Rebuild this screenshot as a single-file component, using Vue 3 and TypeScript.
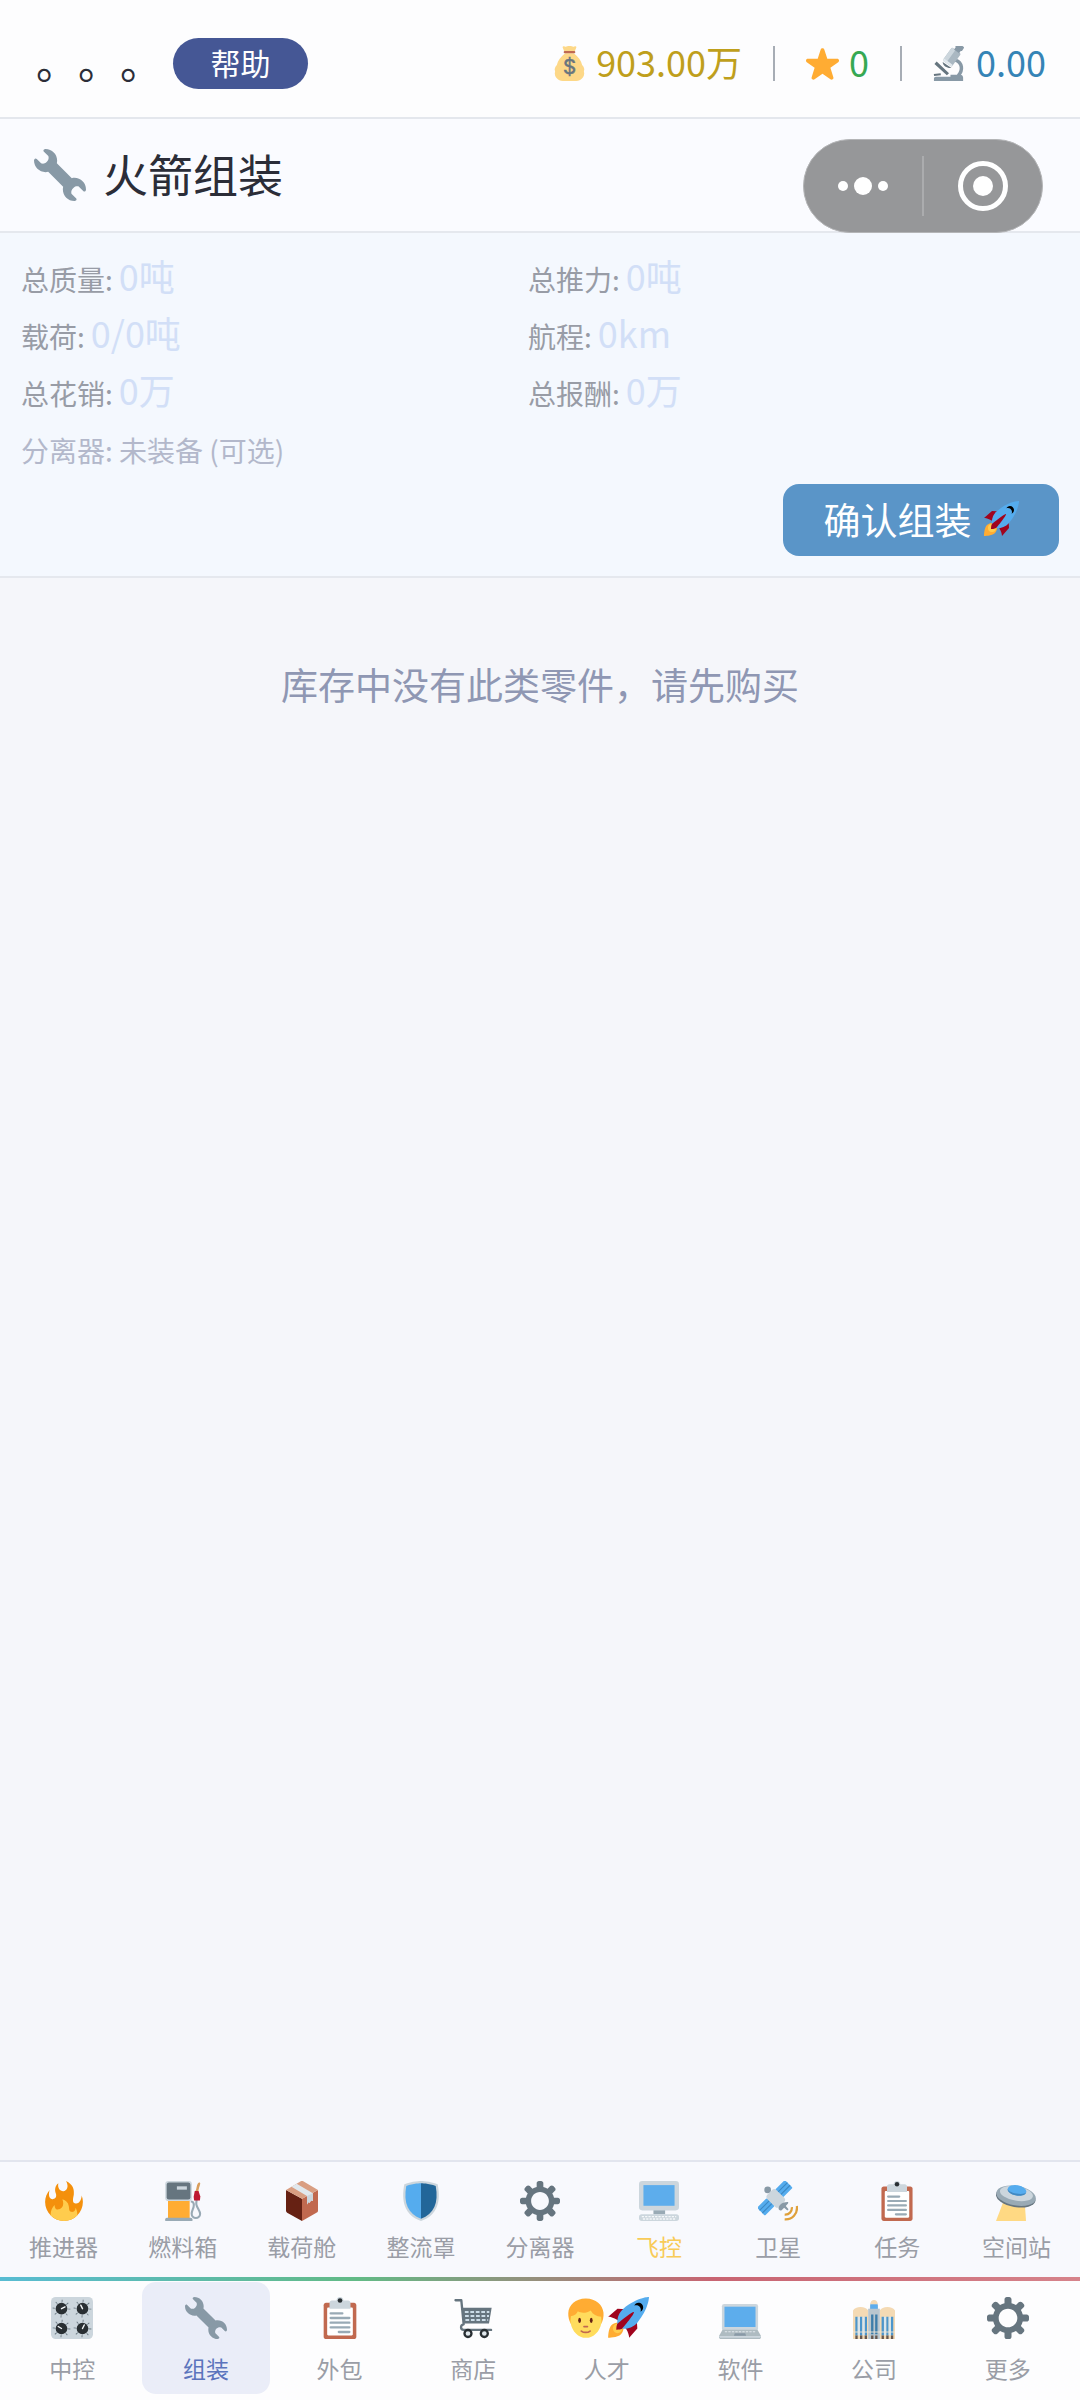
<script setup lang="ts">
import { ref } from 'vue'

interface Stat {
  label: string
  value: string
}

interface Tab {
  label: string
  icons: string[]
  highlight?: boolean
}

const stats: Stat[] = [
  { label: '总质量:', value: '0吨' },
  { label: '总推力:', value: '0吨' },
  { label: '载荷:', value: '0/0吨' },
  { label: '航程:', value: '0km' },
  { label: '总花销:', value: '0万' },
  { label: '总报酬:', value: '0万' },
]

const partTabs: Tab[] = [
  { label: '推进器', icons: ['fire'] },
  { label: '燃料箱', icons: ['pump'] },
  { label: '载荷舱', icons: ['package'] },
  { label: '整流罩', icons: ['shield'] },
  { label: '分离器', icons: ['gear'] },
  { label: '飞控', icons: ['desktop'], highlight: true },
  { label: '卫星', icons: ['satellite'] },
  { label: '任务', icons: ['clipboard'] },
  { label: '空间站', icons: ['ufo'] },
]

const mainTabs: Tab[] = [
  { label: '中控', icons: ['knobs'] },
  { label: '组装', icons: ['wrench'] },
  { label: '外包', icons: ['clipboard'] },
  { label: '商店', icons: ['cart'] },
  { label: '人才', icons: ['person', 'rocket'] },
  { label: '软件', icons: ['laptop'] },
  { label: '公司', icons: ['office'] },
  { label: '更多', icons: ['gear'] },
]

const activeMain = ref('组装')
</script>

<template>
  <div class="app">
    <svg class="sprite" aria-hidden="true">
      <symbol id="wrench" viewBox="0 0 36 36">
        <path fill="#8899A6" d="M27.989 19.977c-.622 0-1.225.078-1.806.213L15.811 9.818c.134-.581.212-1.184.212-1.806C16.023 3.587 12.436 0 8.012 0 7.11 0 5.91.916 6.909 1.915l2.997 2.997s.999 1.998-.999 3.995-3.996.998-3.996.998L1.915 6.909C.916 5.91 0 7.105 0 8.012c0 4.425 3.587 8.012 8.012 8.012.622 0 1.225-.078 1.806-.212l10.371 10.371c-.135.581-.213 1.184-.213 1.806 0 4.425 3.588 8.011 8.012 8.011.901 0 2.101-.916 1.102-1.915l-2.997-2.997s-.999-1.998.999-3.995 3.995-.999 3.995-.999l2.997 2.997c1 .999 1.916-.196 1.916-1.102 0-4.425-3.587-8.012-8.011-8.012z" />
      </symbol>
      <symbol id="gear" viewBox="0 0 36 36">
        <path fill="#66757F" d="M34 15h-3.362c-.324-1.369-.864-2.651-1.582-3.814l2.379-2.379c.781-.781.781-2.048 0-2.829l-1.414-1.414c-.781-.781-2.047-.781-2.828 0l-2.379 2.379C23.65 6.225 22.369 5.686 21 5.362V2c0-1.104-.896-2-2-2h-2c-1.104 0-2 .896-2 2v3.362c-1.369.324-2.651.864-3.814 1.582L8.808 4.565c-.781-.781-2.048-.781-2.828 0L4.565 5.979c-.781.781-.781 2.048-.001 2.829l2.379 2.379C6.225 12.35 5.686 13.632 5.362 15H2c-1.104 0-2 .896-2 2v2c0 1.104.896 2 2 2h3.362c.324 1.368.864 2.65 1.582 3.813l-2.379 2.379c-.78.78-.78 2.048.001 2.829l1.414 1.414c.78.78 2.047.78 2.828 0l2.379-2.379c1.163.719 2.445 1.258 3.814 1.582V34c0 1.104.896 2 2 2h2c1.104 0 2-.896 2-2v-3.362c1.368-.324 2.65-.864 3.813-1.582l2.379 2.379c.781.781 2.047.781 2.828 0l1.414-1.414c.781-.781.781-2.048 0-2.829l-2.379-2.379c.719-1.163 1.258-2.445 1.582-3.814H34c1.104 0 2-.896 2-2v-2C36 15.896 35.104 15 34 15zM18 26c-4.418 0-8-3.582-8-8s3.582-8 8-8 8 3.582 8 8-3.582 8-8 8z" />
      </symbol>
      <symbol id="fire" viewBox="0 0 36 36">
        <path fill="#F4900C" d="M35 19c0-2.062-.367-4.039-1.04-5.868-.46 5.389-3.333 8.157-6.335 6.868-2.812-1.208-.917-5.917-.777-8.164.236-3.809-.012-8.169-6.931-11.794 2.875 5.5.333 8.917-2.333 9.125-2.958.231-5.667-2.542-4.667-7.042-3.238 2.386-3.332 6.402-2.333 9 1.042 2.708-.042 4.958-2.583 5.208-2.84.28-4.418-3.041-2.963-8.333C2.52 10.965 1 14.805 1 19c0 9.389 7.611 17 17 17s17-7.611 17-17z" />
        <path fill="#FFCC4D" d="M28.394 23.999c.148 3.084-2.561 4.293-4.019 3.709-2.106-.843-1.541-2.291-2.083-5.291s-2.625-5.083-5.708-6c2.25 6.333-1.247 8.667-3.08 9.084-1.872.426-3.753-.001-3.968-4.007C7.352 23.668 6 26.676 6 30c0 .368.023.73.055 1.09C9.125 34.124 13.342 36 18 36s8.875-1.876 11.945-4.91c.032-.36.055-.722.055-1.09 0-2.187-.584-4.236-1.606-6.001z" />
      </symbol>
      <symbol id="pump" viewBox="0 0 36 36">
        <path d="M25 18.500c3 0 3 2.500 2.500 5-.8 2.500-1.700 4-1.700 6a3.700 3.700 0 0 0 7.600 0c0-2.500-2.900-5.500-3.400-8.500-.3-2 .5-4 .3-5.500" fill="none" stroke="#99AAB5" stroke-width="1.900" />
        <path d="M29 9.500c1.500-2.500 1-5.500 2.500-7.500.8-1 2.200-.6 2 .4-.5 2.500-1.500 4-1.700 7.200z" fill="#D99E5C" />
        <path d="M28.600 9h3.400l1.600 5-.4 3.500h-5.200l-.4-3z" fill="#BE1931" />
        <path fill="#FFAC33" d="M4.500 17h19.500v17H4.500z" />
        <rect x="2" y="0" width="24" height="18" rx="3" fill="#CCD6DD" />
        <rect x="3.300" y="1.300" width="21.400" height="15.400" rx="2" fill="#66757F" />
        <path fill="#CCD6DD" d="M12.500 4.800h9v3h-9z" />
        <path fill="#99AAB5" d="M2 34.500C2 33.700 2.700 33 3.500 33H25c.8 0 1.500.7 1.500 1.500V36H2z" />
      </symbol>
      <symbol id="package" viewBox="0 0 36 36">
        <path fill="#662113" d="M3.600 8L18 16v20L4.600 28.500C4 28 3.600 27.500 3.600 27z" />
        <path fill="#C1694F" d="M18 16l14.400-8v18.500c0 .8-.4 1.500-1 1.900L18 36z" />
        <path fill="#D99E82" d="M3.600 8L16.500.4c1-.5 2-.5 3 0L32.400 8 18 16z" />
        <path fill="#E1E8ED" d="M8.500 5.200L13.200 2.500 27.800 11v7l-1.600-.5-1.300 2-1.200-.3-1.200 2V13.500z" />
        <path fill="#CCD6DD" d="M22.500 13.500L27.800 11v7l-1.600-.5-1.300 2-1.200-.3-1.200 2z" />
      </symbol>
      <symbol id="shield" viewBox="0 0 36 36">
        <path fill="#CCD6DD" d="M33 3c-7-3-15-3-15-3S10 0 3 3C0 18 3 31 18 36c15-5 18-18 15-33z" />
        <path fill="#55ACEE" d="M18 33.884C6.412 29.729 1.961 19.831 4.76 4.444 11.063 2.029 17.928 2 18 2z" />
        <path fill="#226699" d="M31.24 4.444C24.936 2.026 18.071 2 18 2v31.884c11.588-4.155 16.039-14.053 13.24-29.44z" />
      </symbol>
      <symbol id="desktop" viewBox="0 0 36 36">
        <path fill="#99AAB5" d="M13 25h10.500v5H13z" />
        <rect width="36" height="26.500" rx="3" fill="#CCD6DD" />
        <rect x="4" y="3.700" width="28" height="18.600" fill="#5DADEC" />
        <rect y="30" width="36" height="6" rx="2.500" fill="#CCD6DD" />
        <path d="M2.500 32h31M3.500 34.200h29" stroke="#F5F8FA" stroke-width="1.200" stroke-dasharray="2 1" />
      </symbol>
      <symbol id="satellite" viewBox="0 0 36 36">
        <g transform="rotate(-45 23.300 7)">
          <rect x="17" y="2" width="12.500" height="10" rx="1" fill="#55ACEE" />
          <path d="M17 5.300h12.500M17 8.700h12.500" stroke="#3B88C3" stroke-width="1" />
        </g>
        <g transform="rotate(-45 7 23.300)">
          <rect x=".8" y="18.300" width="12.500" height="10" rx="1" fill="#55ACEE" />
          <path d="M.8 21.600h12.500M.8 25h12.500" stroke="#3B88C3" stroke-width="1" />
        </g>
        <circle cx="8.700" cy="8" r="3" fill="#8899A6" />
        <rect x="8.500" y="9.800" width="15.500" height="11.500" rx="3" transform="rotate(45 16 15.300)" fill="#CCD6DD" />
        <path d="M18.500 24.500c.5-3 3.500-5.500 8-5.500.8 0 1 .6.5 1.200l-2 2.300 2.500 3-1 1-3-2.500-2 2c-1.200 1-3 .3-3-1.500z" fill="#8899A6" />
        <path d="M30.500 23.500c.3 4-2.500 7-6.500 6.700M35 22.500c.8 7-4 12.500-11 12" fill="none" stroke="#DFA03A" stroke-width="2" />
      </symbol>
      <symbol id="clipboard" viewBox="0 0 36 36">
        <path fill="#C1694F" d="M32 34c0 1.104-.896 2-2 2H6c-1.104 0-2-.896-2-2V7c0-1.104.896-2 2-2h24c1.104 0 2 .896 2 2v27z" />
        <path fill="#FFF" d="M29 32c0 .553-.447 1-1 1H8c-.552 0-1-.447-1-1V10c0-.552.448-1 1-1h20c.553 0 1 .448 1 1v22z" />
        <path fill="#CCD6DD" d="M25 3h-4c0-1.657-1.343-3-3-3s-3 1.343-3 3h-4c-1.104 0-2 .896-2 2v5h18V5c0-1.104-.896-2-2-2z" />
        <circle cx="18" cy="3" r="2" fill="#292F33" />
        <path d="M10 14h10M10 18h16M10 22h16M10 26h16M17 30h9" stroke="#99AAB5" stroke-width="2" stroke-linecap="round" />
      </symbol>
      <symbol id="ufo" viewBox="0 0 36 36">
        <path fill="#FFD983" d="M6.500 19L26 21l1 15H0z" />
        <g transform="rotate(10 18 13.500)">
          <ellipse cx="18" cy="15" rx="18" ry="8.500" fill="#66757F" />
          <ellipse cx="18" cy="13.200" rx="18" ry="8.800" fill="#99AAB5" />
          <ellipse cx="18" cy="11.200" rx="15" ry="6.500" fill="#CCD6DD" />
          <ellipse cx="18" cy="8.300" rx="8.500" ry="4.600" fill="#55ACEE" />
          <path d="M9.500 8.500c1.500 3.600 15.500 3.600 17 0 0 6-17 6-17 0z" fill="#4289C1" />
        </g>
      </symbol>
      <symbol id="knobs" viewBox="0 0 36 36">
        <rect width="36" height="36" rx="4" fill="#CCD6DD" />
        <g fill="none" stroke="#66757F" stroke-width="2.200" stroke-dasharray=".7 4.400">
          <circle cx="9" cy="10" r="6.500" />
          <circle cx="27" cy="10" r="6.500" />
          <circle cx="9" cy="27" r="6.500" />
          <circle cx="27" cy="27" r="6.500" />
        </g>
        <g fill="#292F33">
          <circle cx="9" cy="10" r="5" />
          <circle cx="27" cy="10" r="5" />
          <circle cx="9" cy="27" r="5" />
          <circle cx="27" cy="27" r="5" />
        </g>
        <path d="M9 10l3-1.500M27 10l-1.500-3M9 27l-2.800-1.700M27 27l1.500-3" stroke="#F5F8FA" stroke-width="1.200" stroke-linecap="round" />
      </symbol>
      <symbol id="cart" viewBox="0 0 36 36">
        <path d="M3 2.800h5L10 23.500c-3 .5-3 4.500 0 4.700h23.500" fill="none" stroke="#66757F" stroke-width="2" stroke-linecap="round" stroke-linejoin="round" />
        <path d="M8.800 9.300H34l-2.300 13.500H10z" fill="#66757F" />
        <path d="M11 12.800h21M11.200 16.200h20.500M11.500 19.800h19.500" stroke="#CCDDE8" stroke-width="1.700" stroke-dasharray="3.200 1.500" />
        <circle cx="13.700" cy="31.300" r="3" fill="#E1E8ED" stroke="#292F33" stroke-width="2" />
        <circle cx="27.700" cy="31.300" r="3" fill="#E1E8ED" stroke="#292F33" stroke-width="2" />
      </symbol>
      <symbol id="person" viewBox="0 0 36 36">
        <path fill="#FFAC33" d="M18 1.200C9.500 1 3 6.500 2.800 14c-.1 3 .7 6.500 2.200 9h26c1.500-2.500 2.300-6 2-9.500C32.400 6.500 26.500 1.400 18 1.200z" />
        <path fill="#FFDC5D" d="M5 16.500c3.500-.5 5-2 6-4.200 3.500 2.200 8 1.200 11-.8 2 3.500 5 5 9 5.500 0 1.500.5 3 .2 5C30 29.500 24.500 35 18 35S6 29.500 4.800 22c-.3-2 .2-4 .2-5.500z" />
        <ellipse cx="12.500" cy="20" rx="1.200" ry="2.200" fill="#662113" />
        <ellipse cx="22.500" cy="20" rx="1.200" ry="2.200" fill="#662113" />
        <path d="M16.300 25.300h2.900M14 29.200c2 1.600 5.500 1.600 7.500 0" fill="none" stroke="#C1694F" stroke-width="1.500" stroke-linecap="round" />
      </symbol>
      <symbol id="rocket" viewBox="0 0 36 36">
        <path fill="#A0041E" d="M1 17l8-7 16 1 1 16-7 8s.001-5.999-6-12-12-6-12-6z" />
        <path fill="#FFAC33" d="M.973 35s-.036-7.979 2.985-11S15 21.187 15 21.187 14.999 29 11.999 32c-3 3-11.026 3-11.026 3z" />
        <circle cx="9" cy="27" r="4" fill="#FFCC4D" />
        <path fill="#55ACEE" d="M35.999 0s-10 0-22 10c-6 5-6 14-4 16s11 2 16-4c10-12 10-22 10-22z" />
        <path d="M26.999 5c-1.623 0-3.013.971-3.641 2.36.502-.227 1.055-.36 1.641-.36 2.209 0 4 1.791 4 4 0 .586-.133 1.139-.359 1.64 1.389-.627 2.359-2.017 2.359-3.64 0-2.209-1.791-4-4-4z" />
        <path fill="#A0041E" d="M8 28s0-4 1-5 13.001-10.999 14-10-9.001 13-10.001 14S8 28 8 28z" />
      </symbol>
      <symbol id="laptop" viewBox="0 0 36 36">
        <rect x="2.500" y="6" width="31" height="23" rx="2" fill="#CCD6DD" />
        <rect x="4.700" y="8.300" width="26.600" height="17.400" fill="#5DADEC" />
        <path fill="#AEBBC1" d="M3 28h30l3 5.500v1c0 1-.8 1.500-1.500 1.500h-33C.8 36 0 35.500 0 34.500v-1z" />
        <path fill="#CCD6DD" d="M0 33.500h36c0 1-.7 1.500-1.500 1.500h-33C.7 35 0 34.500 0 33.500z" />
        <path d="M5 29.800h26" stroke="#E1E8ED" stroke-dasharray="2 1" />
        <path fill="#8899A6" d="M13.500 31h9l.7 2.300H12.800z" />
      </symbol>
      <symbol id="office" viewBox="0 0 36 36">
        <path fill="#F4DAB4" d="M0 11.500C1 9.500 3.500 8.500 6.500 8.500S12 9.500 13 11.500V36H0zM23 11.500c1-2 3.500-3 6.500-3s5.500 1 6.500 3V36H23z" />
        <path fill="#B9C6CE" d="M13 10h1.500C14.500 5 16 3 18 3s3.500 2 3.500 7H23v26H13z" />
        <path fill="#F4DAB4" d="M15 5c.5-1.500 1.500-2.500 3-2.500S20.500 3.500 21 5v1h-6z" />
        <path fill="#5DADEC" d="M14.800 6.500h6.400V10h-6.400z" />
        <path d="M3 17v16M7 17v16M11 17v16M25.500 17v16M29.500 17v16M33.500 17v16" stroke="#4C96CC" stroke-width="2" />
        <path d="M5 17v16M9 17v16M27.500 17v16M31.500 17v16" stroke="#D8E6EE" stroke-width="1.800" />
        <path d="M16.500 15v17M20 15v17" stroke="#3D7DAA" stroke-width="2" />
        <path d="M0 30h36" stroke="#EEE5D5" stroke-width=".8" />
        <path d="M3 33v3M7 33v3M11 33v3M16.500 33v3M20 33v3M25.500 33v3M29.500 33v3M33.500 33v3" stroke="#66574F" stroke-width="2" />
      </symbol>
      <symbol id="star" viewBox="0 0 36 36">
        <path fill="#FFAC33" d="M27.287 34.627c-.404 0-.806-.124-1.152-.371L18 28.422l-8.135 5.834c-.343.247-.744.371-1.148.371-.409 0-.814-.126-1.161-.378-.686-.499-.97-1.383-.711-2.189l3.046-9.611-8.066-5.834c-.677-.505-.957-1.387-.696-2.188.261-.802 1.008-1.346 1.851-1.349l10.078-.015 3.094-9.487C16.435 2.773 17.174 2.250 18 2.250s1.565.523 1.848 1.326l3.096 9.487 10.086.015c.843.003 1.590.547 1.851 1.349.26.801-.02 1.683-.696 2.188l-8.072 5.834 3.050 9.611c.259.806-.025 1.690-.711 2.189-.347.252-.751.376-1.165.378z" />
      </symbol>
      <symbol id="money" viewBox="0 0 36 36">
        <path fill="#FDD888" d="M13.500 7.500h9c4.500 3.500 7.500 7.500 8.500 12 2 2 2.800 4.500 1.800 6.500 1 3.500-.3 6-2 7.500C29.500 35.300 27.500 36 25 36H11c-2.500 0-4.500-.7-5.800-2.500-1.700-1.500-3-4-2-7.500-1-2-.2-4.500 1.800-6.500 1-4.500 4-8.500 8.500-12z" />
        <path fill="#FDD888" d="M12.500 5.500L11 1.500c-.3-1.200.8-1.700 2-1 1.700.8 2.500-.5 5-.5s3.300 1.300 5 .5c1.200-.7 2.300-.2 2 1l-1.500 4z" />
        <rect x="12" y="5.200" width="12" height="2.300" rx="1.100" fill="#BF6952" />
        <text x="18" y="29" text-anchor="middle" font-family="Inter, sans-serif" font-size="21" fill="#67757F" stroke="#67757F" stroke-width=".5">$</text>
      </symbol>
      <symbol id="microscope" viewBox="0 0 36 36">
        <path d="M24 14.500c7.500 2.500 8 10.500 3 16" fill="none" stroke="#8899A6" stroke-width="3.600" />
        <path fill="#66757F" d="M2.500 18.500l2.300-2.500L17.500 28l-2.200 2z" />
        <path fill="#8899A6" d="M2 36v-2.500C2 32.200 3 31.500 4 31.500h15v-2h10c1.800 0 3 1.200 3 3V36z" />
        <path d="M2 29.800l7-.8" stroke="#66757F" stroke-width="2" />
        <path fill="#66757F" d="M11 16.500l9 6c-3.500.8-9-1.500-9-6z" />
        <g transform="rotate(36 21 11)">
          <rect x="15" y="3.500" width="11.500" height="16.500" rx="1.500" fill="#AAB8C2" />
          <rect x="15" y="3.500" width="4.500" height="16.500" rx="1.500" fill="#CCD6DD" />
          <rect x="18" y="0" width="6.400" height="4" fill="#8899A6" />
          <rect x="17" y="-4" width="8.400" height="5" rx="1.200" fill="#8899A6" />
          <rect x="15" y="17.500" width="11.500" height="2.500" rx="1" fill="#E1E8ED" />
        </g>
      </symbol>
    </svg>

    <header class="topbar">
      <span class="player">。。。</span>
      <button type="button" class="help">帮助</button>
      <ul class="wallet">
        <li class="money">
          <svg class="i35" aria-hidden="true"><use href="#money" /></svg>903.00万
        </li>
        <li class="fame">
          <svg class="i35" aria-hidden="true"><use href="#star" /></svg>0
        </li>
        <li class="science">
          <svg class="i35" aria-hidden="true"><use href="#microscope" /></svg>0.00
        </li>
      </ul>
    </header>

    <section class="titlebar">
      <svg class="i52" aria-hidden="true"><use href="#wrench" /></svg>
      <h1>火箭组装</h1>
      <div class="capsule">
        <button type="button" aria-label="更多选项">
          <svg width="52" height="52" viewBox="0 0 52 52" fill="#fff">
            <circle cx="6" cy="26" r="5" />
            <circle cx="26" cy="26" r="9" />
            <circle cx="46" cy="26" r="5" />
          </svg>
        </button>
        <span class="split"></span>
        <button type="button" aria-label="关闭">
          <svg width="52" height="52" viewBox="0 0 52 52" fill="none">
            <circle cx="26" cy="26" r="22.500" stroke="#fff" stroke-width="5" />
            <circle cx="26" cy="26" r="10" fill="#fff" />
          </svg>
        </button>
      </div>
    </section>

    <section class="summary">
      <dl class="stats">
        <div v-for="s in stats" :key="s.label" class="stat">
          <dt>{{ s.label }}</dt>
          <dd>{{ s.value }}</dd>
        </div>
      </dl>
      <p class="separator">分离器: 未装备 (可选)</p>
      <button type="button" class="confirm">
        确认组装
        <svg class="i36" aria-hidden="true"><use href="#rocket" /></svg>
      </button>
    </section>

    <main class="inventory">
      <p>库存中没有此类零件，请先购买</p>
    </main>

    <nav class="parts" aria-label="零件">
      <button v-for="t in partTabs" :key="t.label" type="button" :class="{ highlight: t.highlight }">
        <svg v-for="i in t.icons" :key="i" class="i40" aria-hidden="true"><use :href="'#' + i" /></svg>
        <span>{{ t.label }}</span>
      </button>
    </nav>

    <nav class="main-nav" aria-label="主导航">
      <a
        v-for="t in mainTabs"
        :key="t.label"
        href="#"
        :class="{ active: t.label === activeMain }"
        @click.prevent="activeMain = t.label"
      >
        <span class="icons">
          <svg v-for="i in t.icons" :key="i" class="i42" aria-hidden="true"><use :href="'#' + i" /></svg>
        </span>
        <span>{{ t.label }}</span>
      </a>
    </nav>
  </div>
</template>

<style>
body {
  margin: 0;
  background: #f5f6fa;
}
</style>

<style scoped>
.app {
  position: relative;
  display: flex;
  flex-direction: column;
  min-height: 100vh;
  background: #f5f6fa;
  font-family: "Noto Sans CJK SC", "Noto Sans", sans-serif;
  font-weight: 400;
  text-spacing-trim: space-all;
  color: #2b2d38;
}

.sprite {
  display: none;
}

h1,
p,
dl,
dd,
ul {
  margin: 0;
  padding: 0;
}

button {
  padding: 0;
  border: 0;
  background: none;
  font: inherit;
  color: inherit;
}

svg {
  display: block;
  flex: none;
}

.i35 {
  width: 35px;
  height: 35px;
}

.i36 {
  width: 36px;
  height: 36px;
}

.i40 {
  width: 40px;
  height: 40px;
}

.i42 {
  width: 42px;
  height: 42px;
}

.i52 {
  width: 52px;
  height: 52px;
}

.topbar {
  display: flex;
  align-items: center;
  height: 107px;
  padding: 10px 34px 0 36px;
  border-bottom: 2px solid #e4e7ed;
  background: #fdfdfe;
}

.player {
  padding-bottom: 6px;
  font-size: 42px;
  line-height: 52px;
}

.help {
  width: 135px;
  height: 51px;
  margin-left: 11px;
  padding-bottom: 2px;
  border-radius: 26px;
  background: #455795;
  color: #fff;
  font-size: 30px;
  line-height: 49px;
}

.wallet {
  display: flex;
  align-items: center;
  margin-left: auto;
  list-style: none;
  font-size: 36px;
  line-height: 30px;
}

.wallet li {
  display: flex;
  gap: 9px;
}

.wallet li + li {
  margin-left: 31px;
  padding-left: 30px;
  border-left: 2px solid #a7adb5;
}

.money {
  color: #bf9f1c;
}

.fame {
  color: #36a853;
}

.science {
  color: #3584b6;
}

.titlebar {
  position: relative;
  display: flex;
  align-items: center;
  gap: 17px;
  height: 112px;
  padding-left: 34px;
  border-bottom: 2px solid #e5e8ee;
  background: #fafbff;
}

h1 {
  padding-bottom: 3px;
  font-size: 45px;
  font-weight: 400;
  line-height: 56px;
}

.capsule {
  position: absolute;
  top: 20px;
  right: 37px;
  display: flex;
  align-items: center;
  box-sizing: border-box;
  width: 240px;
  height: 94px;
  border: 1px solid #b4b5b7;
  border-radius: 47px;
  background: #969799;
}

.capsule button {
  display: flex;
  flex: 1;
  justify-content: center;
}

.split {
  width: 2px;
  height: 60px;
  background: #abacae;
}

.summary {
  padding: 18px 21px 20px;
  border-bottom: 2px solid #e5e8ee;
  background: #f4f8fe;
}

.stats {
  display: grid;
  grid-template-columns: 1fr 1fr;
  margin-right: 24px;
  color: #989ca6;
  font-size: 28px;
  line-height: 57px;
}

.stat {
  display: flex;
  align-items: baseline;
  gap: 6px;
}

dd {
  color: #d2dff7;
  font-size: 36px;
  line-height: 48px;
}

.separator {
  color: #b3b8cb;
  font-size: 28px;
  line-height: 57px;
}

.confirm {
  display: flex;
  align-items: center;
  justify-content: center;
  gap: 11px;
  width: 276px;
  height: 72px;
  margin: 5px 0 0 auto;
  padding-bottom: 2px;
  border-radius: 16px;
  background: #5a95c8;
  color: #fff;
  font-size: 37px;
}

.inventory {
  flex: 1;
  padding-top: 78px;
  color: #8f97b3;
  font-size: 37px;
  line-height: 56px;
  text-align: center;
}

.parts {
  display: flex;
  padding: 0 4px;
  border-top: 2px solid #e2e5ee;
  background: #f8f9fd;
  color: #9a9da6;
}

.parts button {
  display: flex;
  flex: 1;
  flex-direction: column;
  align-items: center;
  gap: 8px;
  padding: 19px 0 13px;
  font-size: 23px;
  line-height: 35px;
}

.parts .highlight {
  color: #f8cb58;
}

.main-nav {
  display: flex;
  gap: 5px;
  padding: 1px 8px 6px;
  border-top: 4px solid;
  border-image: linear-gradient(90deg, #58bcd3, #62ba86 33%, #c86472 66%, #d6838b) 1;
  background: #fdfdfe;
}

.main-nav a {
  display: flex;
  flex: 1;
  flex-direction: column;
  align-items: center;
  gap: 12px;
  padding: 15px 0 8px;
  border-radius: 14px;
  color: #9a9da6;
  font-size: 23px;
  line-height: 35px;
  text-decoration: none;
}

.main-nav .active {
  background: #eaedf8;
  color: #5b74bd;
}

.icons {
  display: flex;
}
</style>
